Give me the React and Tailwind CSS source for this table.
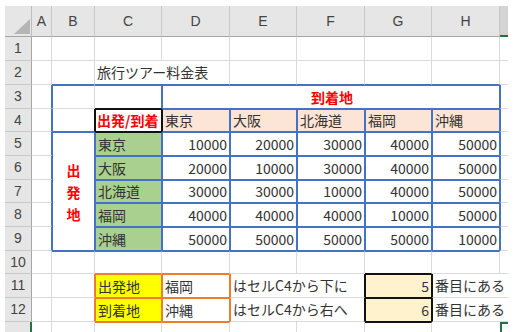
import React from 'react';

const SIDE = {
  blue: { t: 'border-t border-t-[#4472c4]', r: 'border-r border-r-[#4472c4]', b: 'border-b border-b-[#4472c4]', l: 'border-l border-l-[#4472c4]' },
  gray: { t: 'border-t border-t-[#dadada]', r: 'border-r border-r-[#dadada]', b: 'border-b border-b-[#dadada]', l: 'border-l border-l-[#dadada]' },
  black: { t: 'border-t border-t-[#111111]', r: 'border-r border-r-[#111111]', b: 'border-b border-b-[#111111]', l: 'border-l border-l-[#111111]' },
  orange: { t: 'border-t border-t-[#ed7d31]', r: 'border-r border-r-[#ed7d31]', b: 'border-b border-b-[#ed7d31]', l: 'border-l border-l-[#ed7d31]' },
  green: { t: 'border-t-2 border-t-[#217346]', r: 'border-r-2 border-r-[#217346]', b: 'border-b-2 border-b-[#217346]', l: 'border-l-2 border-l-[#217346]' },
};

const COL = ['', 'col-start-1', 'col-start-2', 'col-start-3', 'col-start-4', 'col-start-5', 'col-start-6', 'col-start-7', 'col-start-8', 'col-start-9', 'col-start-10'];
const ROW = ['', 'row-start-1', 'row-start-2', 'row-start-3', 'row-start-4', 'row-start-5', 'row-start-6', 'row-start-7', 'row-start-8', 'row-start-9', 'row-start-10', 'row-start-11', 'row-start-12', 'row-start-13', 'row-start-14'];
const CSPAN = ['', 'col-span-1', 'col-span-2', 'col-span-3', 'col-span-4', 'col-span-5'];
const RSPAN = ['', 'row-span-1', 'row-span-2', 'row-span-3', 'row-span-4', 'row-span-5'];

const cells = [];
function add(col, row, sides, opts = {}) {
  cells.push({ col, row, sides, ...opts });
}

const G = { r: 'gray', b: 'gray' };
// sheet col: A=2 ... H=9, I=10 ; sheet row n -> grid row n+1
// Row 1
for (let c = 2; c <= 9; c++) add(c, 2, G);
add(10, 2, { b: 'gray' });
// Row 2
add(2, 3, G);
add(3, 3, { r: 'gray', b: 'blue' });
add(4, 3, { r: 'gray', b: 'blue' }, { span: 2, text: '旅行ツアー料金表' });
for (let c = 6; c <= 9; c++) add(c, 3, { r: 'gray', b: 'blue' });
add(10, 3, { b: 'gray' });
// Row 3
add(2, 4, { r: 'blue', b: 'gray' });
add(3, 4, { t: 'blue', l: 'blue', r: 'gray', b: 'gray' });
add(4, 4, { t: 'blue', r: 'blue', b: 'black' });
add(5, 4, { t: 'blue', l: 'blue', r: 'blue', b: 'blue' }, { span: 5, text: '到着地', kind: 'redcenter' });
add(10, 4, { l: 'blue', b: 'gray' });
// Row 4
add(2, 5, { r: 'blue', b: 'gray' });
add(3, 5, { l: 'blue', r: 'black', b: 'blue' });
add(4, 5, { t: 'black', l: 'black', r: 'black', b: 'black' }, { text: '出発/到着', kind: 'redleft' });
add(5, 5, { t: 'blue', l: 'black', r: 'blue', b: 'blue' }, { text: '東京', bg: 'peach' });
['大阪', '北海道', '福岡', '沖縄'].forEach((t, i) => add(6 + i, 5, { t: 'blue', l: 'blue', r: 'blue', b: 'blue' }, { text: t, bg: 'peach' }));
add(10, 5, { l: 'blue', b: 'gray' });
// Rows 5-9
const cities = ['東京', '大阪', '北海道', '福岡', '沖縄'];
const prices = [
  [10000, 20000, 30000, 40000, 50000],
  [20000, 10000, 30000, 40000, 50000],
  [30000, 30000, 10000, 40000, 50000],
  [40000, 40000, 40000, 10000, 50000],
  [50000, 50000, 50000, 50000, 10000],
];
add(3, 6, { t: 'blue', l: 'blue', r: 'blue', b: 'blue' }, { rspan: 5, kind: 'vertical' });
for (let i = 0; i < 5; i++) {
  const gr = 6 + i;
  add(2, gr, { r: 'blue', b: 'gray' });
  add(4, gr, { t: i === 0 ? 'black' : 'blue', l: 'blue', r: 'blue', b: 'blue' }, { text: cities[i], bg: 'green' });
  for (let j = 0; j < 5; j++) add(5 + j, gr, { t: 'blue', l: 'blue', r: 'blue', b: 'blue' }, { text: String(prices[i][j]), kind: 'num' });
  add(10, gr, { l: 'blue', b: 'gray' });
}
// Row 10
add(2, 11, G);
add(3, 11, { t: 'blue', r: 'gray', b: 'gray' });
add(4, 11, { t: 'blue', r: 'gray', b: 'orange' });
add(5, 11, { t: 'blue', r: 'gray', b: 'orange' });
add(6, 11, { t: 'blue', r: 'gray', b: 'gray' });
add(7, 11, { t: 'blue', r: 'gray', b: 'gray' });
add(8, 11, { t: 'blue', r: 'gray', b: 'black' });
add(9, 11, { t: 'blue', r: 'gray', b: 'gray' });
add(10, 11, { b: 'gray' });
// Rows 11-12
[
  ['出発地', '福岡', 'はセルC4から下に', '5'],
  ['到着地', '沖縄', 'はセルC4から右へ', '6'],
].forEach((r, i) => {
  const gr = 12 + i;
  add(2, gr, G);
  add(3, gr, { r: 'orange', b: 'gray' });
  add(4, gr, { t: 'orange', l: 'orange', r: 'orange', b: 'orange' }, { text: r[0], bg: 'yellow' });
  add(5, gr, { t: 'orange', l: 'orange', r: 'orange', b: 'orange' }, { text: r[1] });
  add(6, gr, { l: 'orange', r: 'black', b: 'gray' }, { span: 2, text: r[2] });
  add(8, gr, { t: 'black', l: 'black', r: 'black', b: 'black' }, { text: r[3], kind: 'num', bg: 'cream' });
  add(9, gr, { l: 'black', b: 'gray' }, { span: 2, text: '番目にある' });
});
// Row 13 (partial)
add(2, 14, { r: 'gray' });
add(3, 14, { r: 'gray' });
add(4, 14, { t: 'orange', r: 'gray' });
add(5, 14, { t: 'orange', r: 'gray' });
add(6, 14, { r: 'gray' });
add(7, 14, { r: 'gray' });
add(8, 14, { t: 'black', r: 'gray' });
add(9, 14, {});
add(10, 14, { t: 'green', l: 'green' });

const BG = {
  peach: 'bg-[#fce4d6]',
  green: 'bg-[#a9d08e]',
  yellow: 'bg-[#ffff00]',
  cream: 'bg-[#fff2cc]',
};

function Cell({ c }) {
  const cls = [COL[c.col], ROW[c.row]];
  if (c.span) cls.push(CSPAN[c.span]);
  if (c.rspan) cls.push(RSPAN[c.rspan]);
  for (const k of ['t', 'r', 'b', 'l']) if (c.sides[k]) cls.push(SIDE[c.sides[k]][k]);
  cls.push(c.bg ? BG[c.bg] : 'bg-white');
  cls.push('flex items-center overflow-visible whitespace-nowrap min-w-0');
  let inner = null;
  if (c.kind === 'vertical') {
    cls.push('flex-col justify-center');
    inner = ['出', '発', '地'].map((ch) => (
      <span key={ch} className="block leading-[22px] text-[14px] font-bold text-[#ff0000]">{ch}</span>
    ));
  } else if (c.kind === 'redcenter') {
    cls.push('justify-center');
    inner = <span className="text-[14px] font-bold text-[#ff0000] pl-[2px]">{c.text}</span>;
  } else if (c.kind === 'redleft') {
    inner = <span className="text-[14px] font-bold text-[#ff0000] pl-[1px]">{c.text}</span>;
  } else if (c.kind === 'num') {
    cls.push('justify-end');
    inner = <span className="text-[14px] text-[#333333] pr-[2px]">{c.text}</span>;
  } else if (c.text) {
    inner = <span className="text-[14px] text-[#333333] pl-[2px]">{c.text}</span>;
  }
  return <div className={cls.join(' ')}>{inner}</div>;
}

const colLetters = ['A', 'B', 'C', 'D', 'E', 'F', 'G', 'H'];

export default function App() {
  return (
    <div className="w-[523px] h-[332px] overflow-hidden bg-white pl-[5px] pt-[6px] font-['Noto_Sans_CJK_JP','Noto_Sans',sans-serif]">
      <div className="grid grid-cols-[27px_20px_43px_67px_68px_67px_68px_67px_68px_8px] grid-rows-[31px_24px_24px_24px_23px_24px_24px_23px_24px_24px_23px_24px_24px_10px]">
        {/* corner */}
        <div className="col-start-1 row-start-1 bg-[#e6e6e6] border-r border-r-[#bdbdbd] border-b border-b-[#a6a6a6] flex items-end justify-end pr-[1px] pb-[2px]">
          <svg width="16" height="15" viewBox="0 0 16 15">
            <polygon points="16,0 16,15 0,15" fill="#b5b5b5" />
          </svg>
        </div>
        {colLetters.map((l, i) => (
          <div
            key={l}
            className={`${COL[i + 2]} row-start-1 bg-[#e6e6e6] border-r border-r-[#c9c9c9] border-b border-b-[#a6a6a6] flex items-center justify-center font-['Liberation_Sans',sans-serif] text-[14px] text-[#444444]`}
          >
            {l}
          </div>
        ))}
        <div className="col-start-10 row-start-1 bg-[#d4d4d4] border-b-2 border-b-[#217346]" />
        {/* row headers */}
        {Array.from({ length: 13 }, (_, i) => (
          <div
            key={i}
            className={`col-start-1 ${ROW[i + 2]} bg-[#e6e6e6] ${i === 12 ? 'border-r-2 border-r-[#217346]' : 'border-r border-r-[#a6a6a6] border-b border-b-[#c9c9c9]'} flex items-center justify-center font-['Liberation_Sans',sans-serif] text-[14px] text-[#444444]`}
          >
            {i < 12 ? i + 1 : ''}
          </div>
        ))}
        {cells.map((c, i) => (
          <Cell key={i} c={c} />
        ))}
      </div>
    </div>
  );
}
